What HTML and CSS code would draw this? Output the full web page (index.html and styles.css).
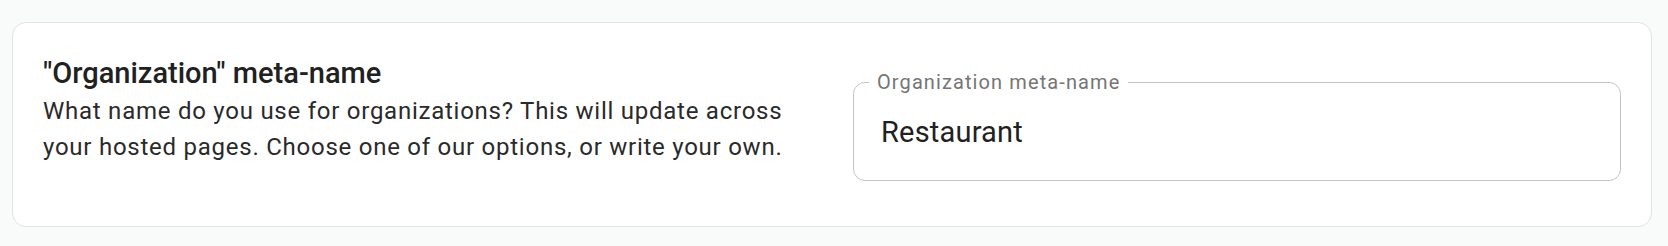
FILE: index.html
```html
<!DOCTYPE html>
<html lang="en">
<head>
<meta charset="utf-8">
<title>Organization meta-name</title>
<link rel="stylesheet" href="styles.css">
</head>
<body>
  <section class="card">
    <div class="info">
      <h2 class="title">"Organization" meta-name</h2>
      <p class="desc">What name do you use for organizations? This will update across your hosted pages. Choose one of our options, or write your own.</p>
    </div>
    <div class="field">
      <label class="field-label" for="meta">Organization meta-name</label>
      <input class="field-input" id="meta" type="text" value="Restaurant">
    </div>
  </section>
</body>
</html>
```

FILE: styles.css
```css
* { box-sizing: border-box; }

html, body {
  margin: 0;
  padding: 0;
  background: #f9fafa;
  font-family: Roboto, "Liberation Sans", Arial, sans-serif;
}

body {
  padding: 22px 16px 0 12px;
}

.card {
  display: grid;
  grid-template-columns: 1fr 1fr;
  column-gap: 42px;
  align-items: start;
  background: #ffffff;
  border: 1px solid #e2e3e3;
  border-radius: 14px;
  padding: 32px 30px 45px 30px;
}

.info {
  min-width: 0;
}

.title {
  margin: 0 0 2px 0;
  font-size: 29px;
  line-height: 36px;
  font-weight: 500;
  color: #212121;
}

.desc {
  margin: 0;
  font-size: 24px;
  line-height: 36px;
  font-weight: 400;
  letter-spacing: 0.75px;
  color: #2a2a2a;
}

.field {
  position: relative;
  margin-top: 27px;
  height: 99px;
  border: 1px solid #c4c4c4;
  border-radius: 12px;
  display: flex;
  align-items: center;
}

.field-label {
  position: absolute;
  left: 15px;
  top: -12px;
  padding: 0 8px;
  background: #ffffff;
  font-size: 20px;
  line-height: 22px;
  letter-spacing: 1.1px;
  color: #757575;
}

.field-input {
  width: 100%;
  border: 0;
  outline: none;
  background: transparent;
  padding: 0 27px;
  font-family: inherit;
  font-size: 29px;
  line-height: 36px;
  letter-spacing: 0.2px;
  color: #212121;
}
```
